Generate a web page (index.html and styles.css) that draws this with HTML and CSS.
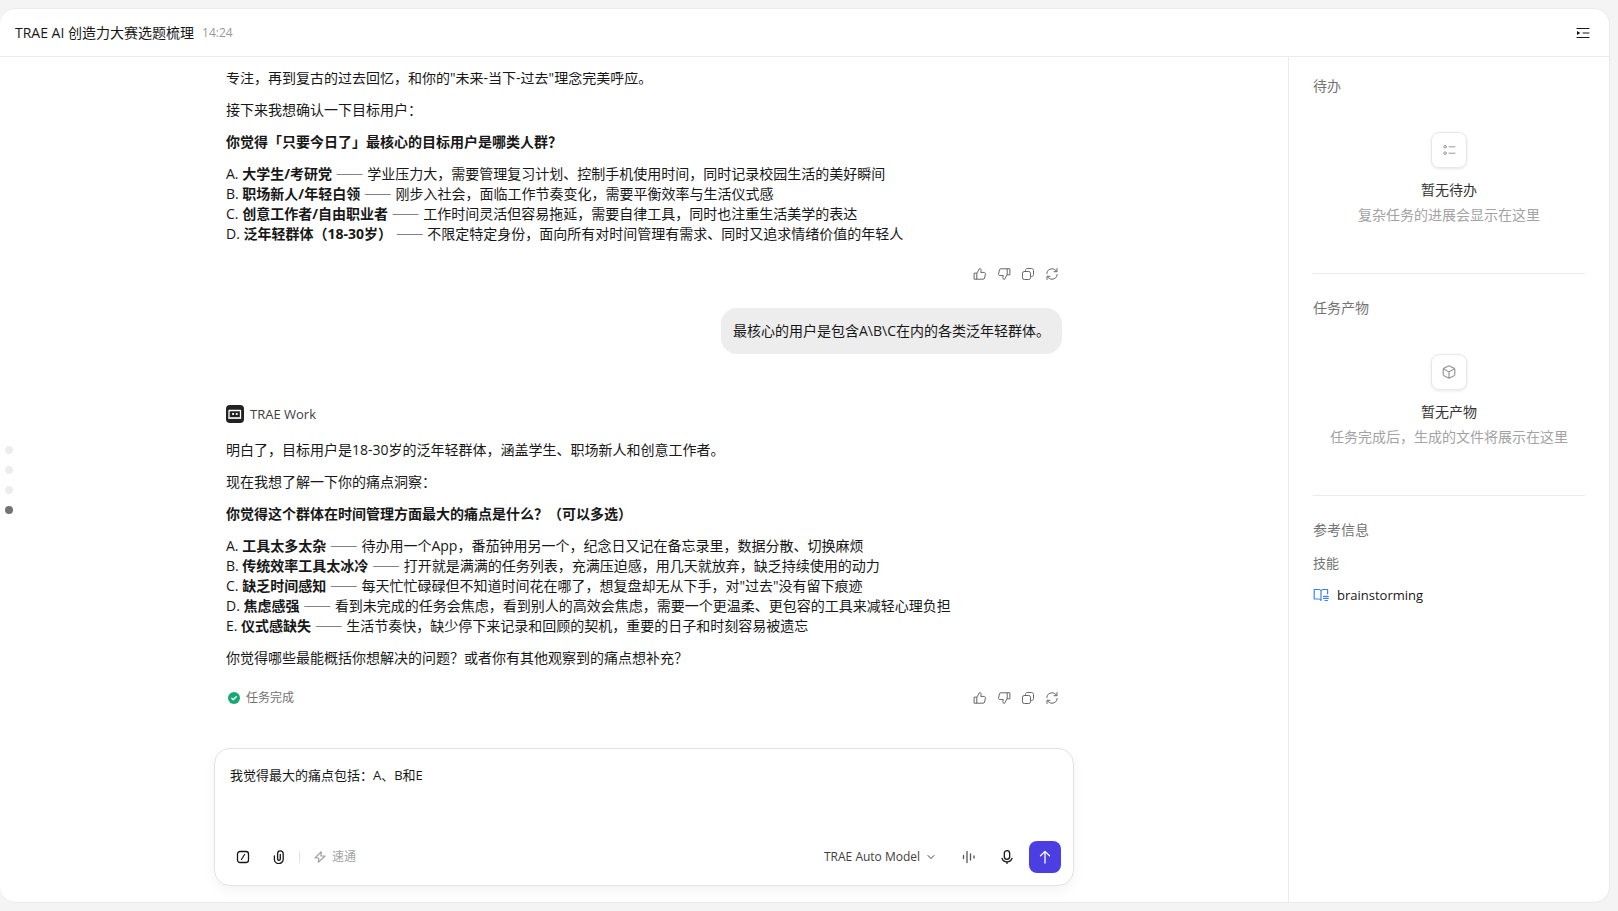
FILE: index.html
```html
<!DOCTYPE html>
<html lang="zh-CN">
<head>
<meta charset="utf-8">
<meta name="viewport" content="width=device-width, initial-scale=1">
<title>TRAE AI 创造力大赛选题梳理</title>
<link rel="stylesheet" href="styles.css">
</head>
<body>
<svg class="sprite" aria-hidden="true">
  <symbol id="i-up" viewBox="0 0 14 14"><path d="M1.500 6.200h2.300v6H1.500zM3.800 6.400 6.500 1.600c1.300 0 1.900.9 1.600 2.100l-.4 1.700h3.400c.9 0 1.500.7 1.300 1.600l-.8 4c-.2.8-.7 1.200-1.400 1.200H3.800"/></symbol>
  <symbol id="i-down" viewBox="0 0 14 14"><path d="M12.500 7.800h-2.300v-6h2.300zM10.200 7.600 7.500 12.400c-1.300 0-1.900-.9-1.600-2.100l.4-1.700H2.900c-.9 0-1.500-.7-1.300-1.600l.8-4c.2-.8.7-1.200 1.400-1.200h6.400"/></symbol>
  <symbol id="i-copy" viewBox="0 0 14 14"><rect x="1.500" y="4.500" width="8" height="8" rx="1.800"/><path d="M4.500 4.300V3.400c0-1.100.7-1.900 1.800-1.900h4.300c1.100 0 1.900.8 1.900 1.900v4.200c0 1.100-.8 1.900-1.900 1.900H9.700"/></symbol>
  <symbol id="i-refresh" viewBox="0 0 14 14"><path d="M1.800 6.500C2 3.800 4.200 1.800 7 1.800c2 0 3.700 1 4.700 2.700M12.200 7.500c-.2 2.700-2.400 4.700-5.200 4.700-2 0-3.700-1-4.700-2.700M12 1.500v3.200H9M2 12.500V9.300h3"/></symbol>
</svg>
<div class="panel">
  <header class="topbar">
    <h1 class="topbar-title">TRAE AI 创造力大赛选题梳理</h1>
    <time class="topbar-time">14:24</time>
    <button class="icon-btn topbar-toggle" type="button" aria-label="收起侧栏">
      <svg width="14" height="14" viewBox="0 0 14 14"><path d="M1 2.500h12M1 11.500h12" stroke-width="1.200"/><path d="M7 7h6"/><path d="M1 5v4l3.400-2z" fill="currentColor" stroke="none"/></svg>
    </button>
  </header>
  <div class="body">
    <main class="chat">
      <nav class="turns" aria-label="对话定位">
        <a class="turn" href="#t1" aria-label="第1轮"></a>
        <a class="turn" href="#t2" aria-label="第2轮"></a>
        <a class="turn" href="#t3" aria-label="第3轮"></a>
        <a class="turn turn-active" href="#t4" aria-label="第4轮"></a>
      </nav>
      <div class="scroller">
        <div class="thread">
          <article class="reply" id="t3">
            <p>专注，再到复古的过去回忆，和你的"未来-当下-过去"理念完美呼应。</p>
            <p>接下来我想确认一下目标用户：</p>
            <p><strong>你觉得「只要今日了」最核心的目标用户是哪类人群？</strong></p>
            <p>A. <strong>大学生/考研党</strong> <span class="dash">——</span> 学业压力大，需要管理复习计划、控制手机使用时间，同时记录校园生活的美好瞬间<br>
            B. <strong>职场新人/年轻白领</strong> <span class="dash">——</span> 刚步入社会，面临工作节奏变化，需要平衡效率与生活仪式感<br>
            C. <strong>创意工作者/自由职业者</strong> <span class="dash">——</span> 工作时间灵活但容易拖延，需要自律工具，同时也注重生活美学的表达<br>
            D. <strong>泛年轻群体（18-30岁）</strong> <span class="dash">——</span> 不限定特定身份，面向所有对时间管理有需求、同时又追求情绪价值的年轻人</p>
          </article>
          <div class="reply-foot">
            <div class="actions">
              <button class="act" type="button" aria-label="赞"><svg><use href="#i-up"/></svg></button>
              <button class="act" type="button" aria-label="踩"><svg><use href="#i-down"/></svg></button>
              <button class="act" type="button" aria-label="复制"><svg><use href="#i-copy"/></svg></button>
              <button class="act" type="button" aria-label="重试"><svg><use href="#i-refresh"/></svg></button>
            </div>
          </div>
          <div class="bubble" id="t4">最核心的用户是包含A\B\C在内的各类泛年轻群体。</div>
          <div class="agent">
            <svg class="agent-logo" viewBox="0 0 18 18"><rect width="18" height="18" rx="4" fill="#222"/><rect x="3" y="5.500" width="11.500" height="7.500" fill="none" stroke="#fff" stroke-width="1.300"/><path d="M3 13.200h11.500" stroke="#ddd" stroke-width="1.600"/><path d="M6.200 8h1.800v2H6.200zM9.800 8h1.800v2H9.800z" fill="#fff"/></svg>
            <span>TRAE Work</span>
          </div>
          <article class="reply">
            <p>明白了，目标用户是18-30岁的泛年轻群体，涵盖学生、职场新人和创意工作者。</p>
            <p>现在我想了解一下你的痛点洞察：</p>
            <p><strong>你觉得这个群体在时间管理方面最大的痛点是什么？（可以多选）</strong></p>
            <p>A. <strong>工具太多太杂</strong> <span class="dash">——</span> 待办用一个App，番茄钟用另一个，纪念日又记在备忘录里，数据分散、切换麻烦<br>
            B. <strong>传统效率工具太冰冷</strong> <span class="dash">——</span> 打开就是满满的任务列表，充满压迫感，用几天就放弃，缺乏持续使用的动力<br>
            C. <strong>缺乏时间感知</strong> <span class="dash">——</span> 每天忙忙碌碌但不知道时间花在哪了，想复盘却无从下手，对"过去"没有留下痕迹<br>
            D. <strong>焦虑感强</strong> <span class="dash">——</span> 看到未完成的任务会焦虑，看到别人的高效会焦虑，需要一个更温柔、更包容的工具来减轻心理负担<br>
            E. <strong>仪式感缺失</strong> <span class="dash">——</span> 生活节奏快，缺少停下来记录和回顾的契机，重要的日子和时刻容易被遗忘</p>
            <p>你觉得哪些最能概括你想解决的问题？或者你有其他观察到的痛点想补充？</p>
          </article>
          <div class="reply-foot">
            <div class="status">
              <svg width="12" height="12" viewBox="0 0 12 12"><circle cx="6" cy="6" r="6" fill="#18a878" stroke="none"/><path d="m3.800 6.200 1.500 1.500 2.900-3" stroke="#fff" stroke-width="1.300"/></svg>
              <span>任务完成</span>
            </div>
            <div class="actions">
              <button class="act" type="button" aria-label="赞"><svg><use href="#i-up"/></svg></button>
              <button class="act" type="button" aria-label="踩"><svg><use href="#i-down"/></svg></button>
              <button class="act" type="button" aria-label="复制"><svg><use href="#i-copy"/></svg></button>
              <button class="act" type="button" aria-label="重试"><svg><use href="#i-refresh"/></svg></button>
            </div>
          </div>
        </div>
      </div>
      <form class="composer">
        <textarea class="composer-input" aria-label="输入消息">我觉得最大的痛点包括：A、B和E</textarea>
        <div class="toolbar">
          <button class="icon-btn" type="button" aria-label="命令">
            <svg width="14" height="14" viewBox="0 0 14 14"><rect x="1.500" y="1.500" width="11" height="11" rx="2.500" stroke-width="1.300"/><path d="M8.600 4.500 5.400 9.500" stroke-width="1.200"/></svg>
          </button>
          <button class="icon-btn" type="button" aria-label="附件">
            <svg width="14" height="14" viewBox="0 0 14 14"><path d="M2.400 6v3.200a4.400 4.400 0 0 0 8.800 0V3.700a2.800 2.800 0 0 0-5.600 0v5.200a1.300 1.300 0 0 0 2.700 0V4.500" stroke-width="1.300"/></svg>
          </button>
          <span class="sep"></span>
          <button class="fast" type="button">
            <svg width="12" height="12" viewBox="0 0 12 12"><path d="M7.300.8 1 7h3.800l-.5 4.200L11 5H6.900z" stroke-width="1.200"/></svg>
            <span>速通</span>
          </button>
          <span class="spacer"></span>
          <label class="model">
            <select class="model-select" aria-label="模型"><option>TRAE Auto Model</option></select>
            <svg class="model-arrow" width="8" height="8" viewBox="0 0 8 8"><path d="m1 2.500 3 3 3-3"/></svg>
          </label>
          <div class="toolbar-end">
            <button class="icon-btn soft" type="button" aria-label="语音对话">
              <svg width="14" height="14" viewBox="0 0 14 14"><path d="M1.500 5.500v3M5 1.500v11M8.500 4v6M12 6v2" stroke-width="1.300"/></svg>
            </button>
            <button class="icon-btn" type="button" aria-label="语音输入">
              <svg width="14" height="14" viewBox="0 0 14 14"><rect x="4.300" y=".7" width="5.400" height="8.600" rx="2.700" stroke-width="1.300"/><path d="M2 8.300c.7 2.200 2.600 3.600 5 3.600s4.300-1.400 5-3.600M7 12v1.500" stroke-width="1.300"/></svg>
            </button>
            <button class="send" type="submit" aria-label="发送">
              <svg width="14" height="14" viewBox="0 0 14 14"><path d="M7 13V1.500M2.500 5.800 7 1.400l4.500 4.400" stroke-width="1.300"/></svg>
            </button>
          </div>
        </div>
      </form>
    </main>
    <aside class="side">
      <section class="side-block">
        <h2 class="side-title">待办</h2>
        <div class="empty">
          <span class="empty-icon"><svg width="14" height="14" viewBox="0 0 14 14"><circle cx="3" cy="3.800" r="1.300"/><circle cx="3" cy="10.200" r="1.300"/><path d="M7 3.800h6M7 10.200h6"/></svg></span>
          <p class="empty-head">暂无待办</p>
          <p class="empty-note">复杂任务的进展会显示在这里</p>
        </div>
      </section>
      <section class="side-block">
        <h2 class="side-title">任务产物</h2>
        <div class="empty">
          <span class="empty-icon"><svg width="14" height="14" viewBox="0 0 14 14"><path d="m7 .8 4.800 2.300q1 .5 1 1.400v5q0 .9-.8 1.300L7 13.200 2 10.800q-.8-.4-.8-1.300v-5q0-.9 1-1.400zM1.600 4 7 6.800 12.400 4M7 6.800v6.400" stroke-width="1.200"/></svg></span>
          <p class="empty-head">暂无产物</p>
          <p class="empty-note">任务完成后，生成的文件将展示在这里</p>
        </div>
      </section>
      <section class="side-block refs">
        <h2 class="side-title">参考信息</h2>
        <h3 class="refs-kind">技能</h3>
        <a class="skill" href="#brainstorming">
          <svg width="16" height="14" viewBox="0 0 16 14"><path d="M8 2.800C7.600 2 7 1.500 6 1.500H1.200v9.500H6c1 0 1.600.5 2 1.500V2.800c.4-.8 1-1.300 2-1.300h4.600v4.300M10.500 8.300h4.800M10.500 10.400h4.800M12 12.500h2.500" stroke-width="1.200"/></svg>
          <span>brainstorming</span>
        </a>
      </section>
    </aside>
  </div>
</div>
</body>
</html>
```
FILE: styles.css
```css
* {
  box-sizing: border-box;
}

body {
  margin: 0;
  height: 100vh;
  padding: 8px 8px 8px 0;
  background: #f4f4f4;
  color: #171717;
  font: 14px/20px "Open Sans", "Noto Sans CJK SC", sans-serif;
  text-spacing-trim: space-all;
}

h1, h2, h3, p {
  margin: 0;
  font-size: 14px;
  font-weight: 400;
}

button, select, textarea {
  margin: 0;
  padding: 0;
  border: 0;
  background: none;
  color: inherit;
  font: inherit;
}

svg {
  flex: none;
  fill: none;
  stroke: currentColor;
  stroke-linecap: round;
  stroke-linejoin: round;
}

.sprite {
  position: absolute;
  width: 0;
  height: 0;
}

.panel {
  display: flex;
  flex-direction: column;
  height: 100%;
  border: 1px solid #ebebeb;
  border-left: 0;
  border-radius: 16px;
  background: #fff;
  overflow: hidden;
}

.topbar {
  display: flex;
  align-items: center;
  gap: 8px;
  height: 48px;
  padding: 0 10px 0 15px;
  border-bottom: 1px solid #ebebeb;
}

.topbar-time {
  color: #999;
  font-size: 12px;
}

.topbar-toggle {
  margin-left: auto;
}

.icon-btn {
  display: flex;
  align-items: center;
  justify-content: center;
  width: 32px;
  height: 32px;
}

.soft {
  color: #555;
}

.body {
  display: flex;
  flex: 1;
  min-height: 0;
}

.chat {
  position: relative;
  display: flex;
  flex: 1;
  flex-direction: column;
  min-width: 0;
  padding: 15px 16px 16px;
}

.turns {
  position: absolute;
  top: 50%;
  left: 5px;
  display: flex;
  flex-direction: column;
  gap: 12px;
  transform: translateY(-50%);
}

.turn {
  width: 8px;
  height: 8px;
  border-radius: 50%;
  background: #ededed;
}

.turn-active {
  background: #737373;
}

.scroller {
  display: flex;
  flex: 1;
  flex-direction: column;
  justify-content: flex-end;
  min-height: 0;
  overflow: hidden;
}

.thread {
  display: flex;
  flex-direction: column;
  width: 100%;
  max-width: 836px;
  margin: 0 auto;
  padding-bottom: 40px;
}

.reply {
  display: flex;
  flex-direction: column;
  gap: 12px;
}

strong {
  font-weight: 700;
}

.dash {
  font-family: "Noto Sans CJK SC", sans-serif;
  line-height: 1;
}

.reply-foot {
  display: flex;
  align-items: center;
  height: 20px;
  margin-top: 20px;
}

.status {
  display: flex;
  align-items: center;
  gap: 6px;
  padding-left: 2px;
  color: #737373;
  font-size: 12px;
}

.actions {
  display: flex;
  gap: 4px;
  margin-left: auto;
  color: #666;
}

.act {
  display: flex;
  align-items: center;
  justify-content: center;
  width: 20px;
  height: 20px;
}

.act svg {
  width: 14px;
  height: 14px;
}

.bubble {
  align-self: flex-end;
  margin-top: 24px;
  padding: 12px;
  border-radius: 16px;
  background: #ededed;
  line-height: 22px;
}

.agent {
  display: flex;
  align-items: center;
  gap: 6px;
  margin: 50px 0 16px;
  color: #404040;
  font-size: 13px;
}

.agent-logo {
  width: 18px;
  height: 18px;
  stroke: none;
}

.composer {
  display: flex;
  flex-direction: column;
  width: 100%;
  max-width: 860px;
  margin: 0 auto;
  padding: 16px 12px 12px;
  border: 1px solid #e3e3e3;
  border-radius: 16px;
  background: #fff;
  box-shadow: 0 4px 12px rgba(0, 0, 0, 0.05);
}

.composer-input {
  height: 76px;
  padding: 0 3px;
  outline: 0;
  font-size: 13px;
  resize: none;
}

.toolbar {
  display: flex;
  align-items: center;
  gap: 4px;
}

.sep {
  width: 1px;
  height: 12px;
  background: #e3e3e3;
}

.fast {
  display: flex;
  align-items: center;
  gap: 6px;
  height: 32px;
  padding: 0 10px;
  color: #a3a3a3;
  font-size: 12px;
}

.spacer {
  flex: 1;
}

.model {
  position: relative;
  display: flex;
  align-items: center;
  color: #404040;
  font-size: 12px;
}

.model-select {
  height: 32px;
  padding-right: 28px;
  appearance: none;
}

.model-arrow {
  position: absolute;
  right: 14px;
  pointer-events: none;
}

.toolbar-end {
  display: flex;
  gap: 6px;
}

.send {
  display: flex;
  align-items: center;
  justify-content: center;
  width: 32px;
  height: 32px;
  border-radius: 8px;
  background: #4b3fe3;
  color: #fff;
}

.side {
  width: 321px;
  padding: 0 24px;
  border-left: 1px solid #ebebeb;
}

.side-block {
  padding: 24px 0 47px;
  border-bottom: 1px solid #ebebeb;
}

.side-block:first-child {
  padding-top: 19px;
}

.side-title {
  color: #737373;
}

.empty {
  display: flex;
  flex-direction: column;
  align-items: center;
  margin-top: 36px;
  line-height: 22px;
  text-align: center;
}

.empty-icon {
  display: flex;
  align-items: center;
  justify-content: center;
  width: 36px;
  height: 36px;
  margin-bottom: 11px;
  border: 1px solid #e8e8e8;
  border-radius: 8px;
  box-shadow: 0 1px 3px rgba(0, 0, 0, 0.1);
  color: #999;
}

.empty-head {
  color: #333;
}

.empty-note {
  margin-top: 3px;
  color: #a3a3a3;
}

.refs {
  border-bottom: 0;
}

.refs-kind {
  margin-top: 12px;
  color: #737373;
  font-size: 13px;
  line-height: 22px;
}

.skill {
  display: flex;
  align-items: center;
  gap: 8px;
  margin-top: 10px;
  color: #171717;
  font-size: 13px;
  line-height: 22px;
  text-decoration: none;
}

.skill svg {
  color: #3b82f6;
}
```
